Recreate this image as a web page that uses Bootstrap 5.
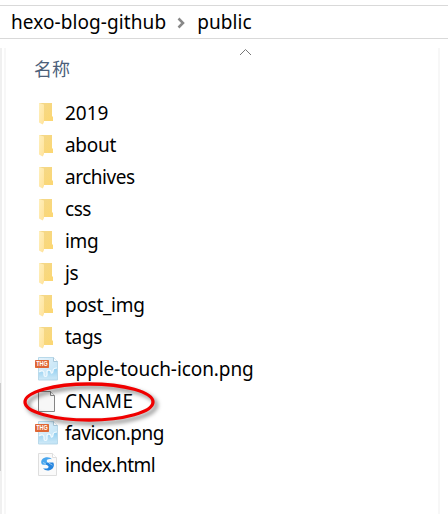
<!DOCTYPE html>
<html lang="zh">
<head>
<meta charset="utf-8">
<meta name="viewport" content="width=device-width, initial-scale=1">
<title>public</title>
<link href="https://cdn.jsdelivr.net/npm/bootstrap@5.3.0/dist/css/bootstrap.min.css" rel="stylesheet">
<style>
body{font-family:"Noto Sans","Noto Sans CJK SC",sans-serif;font-size:19px;line-height:32px;color:#000;background:#fff;height:514px}
.address{margin-top:5px;height:34px;border-top:1px solid #d9d9d9;border-bottom:1px solid #d9d9d9;padding-left:11px;letter-spacing:.08px}
.address svg{margin:2px 12px 0 11px}
.browser{height:466px;margin-top:9px}
.tree{width:2px;background:#f0f0f0;padding-top:335px}
.thumb{width:1px;height:88px;background:#cdcdcd}
.files{width:436px;margin-left:2px;border-left:2px solid #f7f7f7;border-right:2px solid #f7f7f7}
.heading{height:49px;padding:4px 0 0 28px;color:#4c607a}
.heading .label{font-family:"Noto Sans CJK SC",sans-serif;font-size:18px}
.heading svg{left:233px;top:0}
.file{height:32px;padding-left:24px;gap:3px}
.file svg{width:32px;height:32px;flex:none}
.file .ring{left:13px;top:-9.5px;width:146px;height:56px;pointer-events:none;filter:drop-shadow(3px 3px 2px rgba(0,0,0,.5))}
.snug{letter-spacing:-.08px}
.tight{letter-spacing:-.3px}
.tighter{letter-spacing:-.48px}
.wide{letter-spacing:.4px}
</style>
<script src="https://cdn.jsdelivr.net/npm/bootstrap@5.3.0/dist/js/bootstrap.bundle.min.js"></script>
</head>
<body class="overflow-hidden">
<svg width="0" height="0" class="position-absolute">
<defs>
<linearGradient id="gold" x2="1" y2="1"><stop stop-color="#f3d88c"/><stop offset="1" stop-color="#fcd772"/></linearGradient>
<linearGradient id="flap" x2="1" y2="1"><stop stop-color="#fff0bd"/><stop offset="1" stop-color="#ffe29a"/></linearGradient>
<linearGradient id="paper" x2="1" y2="1"><stop stop-color="#e6f3fb"/><stop offset="1" stop-color="#b9e0f5"/></linearGradient>
<linearGradient id="pool" x2="0" y2="1"><stop stop-color="#8fcdf0"/><stop offset="1" stop-color="#c9e7f7"/></linearGradient>
<symbol id="folder" viewBox="0 0 32 32"><path d="M9 6h13v13l1 1v4H9z" fill="url(#gold)"/><path d="M9 6l5 1.600V25l-1.300 2.500L9 25.500z" fill="url(#flap)"/></symbol>
<symbol id="image" viewBox="0 0 32 32"><path d="M8.500 4.500h15l4 4V27h-19z" fill="url(#paper)" stroke="#b9d9ea"/><path d="M23.500 4.500v4h4" fill="#fff" stroke="#a9c9db"/><path d="M9 19c3-2 5-1 5 1v2c0 2 3 2 3 0v-3c0-3 4-2 4 0 0 2 2 1 2-1s1-3 4-3v10.500H9z" fill="url(#pool)"/><path d="M9 19c3-2 5-1 5 1v2c0 2 3 2 3 0v-3c0-3 4-2 4 0 0 2 2 1 2-1s1-3 4-3" fill="none" stroke="#f3fbff" stroke-width="1.200"/><rect x="5" y="7" width="14" height="8" rx=".7" fill="#df6735"/><text x="12" y="13.400" text-anchor="middle" font-family="Liberation Sans,sans-serif" font-weight="700" font-size="6.600" fill="#fff" textLength="11.500" lengthAdjust="spacingAndGlyphs">THG</text></symbol>
<symbol id="blank" viewBox="0 0 32 32"><path d="M8.500 6.500h12l4 4v16h-16z" fill="#f7f7f7" stroke="#858585"/><path d="M20.500 6.500v4h4" fill="#fff" stroke="#858585"/></symbol>
<symbol id="web" viewBox="0 0 32 32"><path d="M8.500 4.500h14l4 4v18h-18z" fill="#fafafa" stroke="#dedede"/><path d="M22.500 4.500v4h4" fill="#fff" stroke="#dedede"/><path d="M12 15.500c-2-3 0-6.500 4-7.200 2.500-.4 4.700.3 6 2-3-.7-5.400 0-5.300 1.700.1 1.300 2.300 2 3.300 3.200-2 .8-6 .8-8 .3z" fill="#48a6ee"/><path d="M23.300 13.500c1.500 3 .2 6.700-3.800 7.800-2.600.6-5-.2-6.400-2 3 .7 5.500.1 5.500-1.600 0-1.300-2.500-2-3.300-3.300 2-.8 6-1.200 8-.9z" fill="#2585df"/><path d="M13 13.500l3 1.500M19 14.200l3.500 2" stroke="#fafafa" stroke-width=".5"/></symbol>
</defs>
</svg>
<nav class="address d-flex align-items-center"><span>hexo-blog-github</span><svg width="8" height="12"><path d="M1.500 1.500l4.500 4.500-4.500 4.500" fill="none" stroke="#888" stroke-width="2.500"/></svg><span>public</span></nav>
<main class="browser d-flex">
<div class="tree"><div class="thumb"></div></div>
<section class="files">
<div class="heading position-relative"><div class="label">名称</div><svg class="position-absolute" width="13" height="9"><path d="M1 7l5.500-5.500L12 7" fill="none" stroke="#777"/></svg></div>
<ul class="list-unstyled mb-0">
<li class="file d-flex"><svg><use href="#folder"/></svg><span>2019</span></li>
<li class="file d-flex"><svg><use href="#folder"/></svg><span class="tight">about</span></li>
<li class="file d-flex"><svg><use href="#folder"/></svg><span class="tighter">archives</span></li>
<li class="file d-flex"><svg><use href="#folder"/></svg><span class="tighter">css</span></li>
<li class="file d-flex"><svg><use href="#folder"/></svg><span class="tight">img</span></li>
<li class="file d-flex"><svg><use href="#folder"/></svg><span class="tighter">js</span></li>
<li class="file d-flex"><svg><use href="#folder"/></svg><span class="tight">post_img</span></li>
<li class="file d-flex"><svg><use href="#folder"/></svg><span class="tight">tags</span></li>
<li class="file d-flex"><svg><use href="#image"/></svg><span class="snug">apple-touch-icon.png</span></li>
<li class="file d-flex position-relative"><svg><use href="#blank"/></svg><span class="wide">CNAME</span><svg class="ring position-absolute"><ellipse cx="70" cy="26" rx="64" ry="18" fill="none" stroke="#f00000" stroke-width="3.300"/></svg></li>
<li class="file d-flex"><svg><use href="#image"/></svg><span class="tighter">favicon.png</span></li>
<li class="file d-flex"><svg><use href="#web"/></svg><span class="tighter">index.html</span></li>
</ul>
</section>
</main>
</body>
</html>
